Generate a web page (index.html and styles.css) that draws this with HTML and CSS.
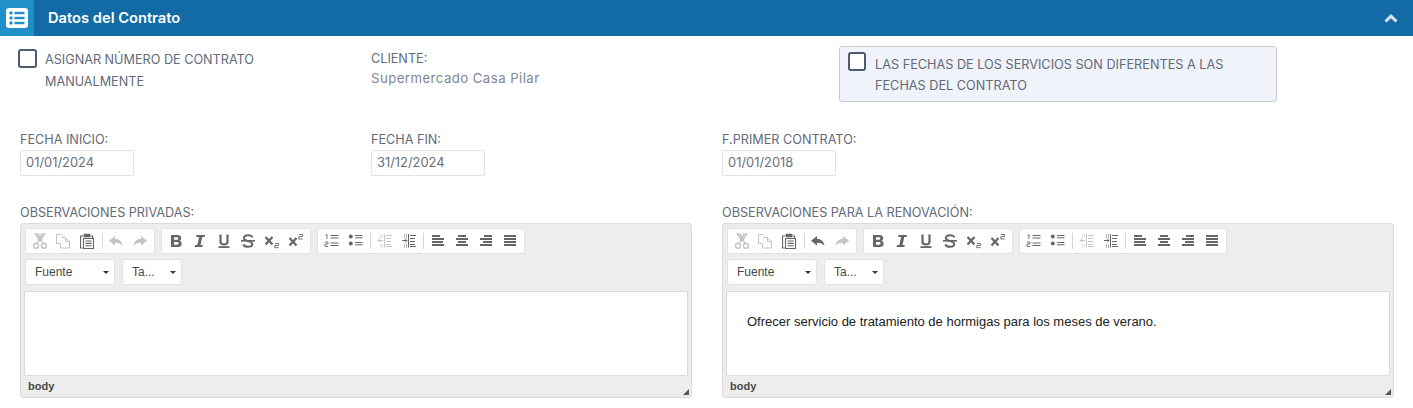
FILE: index.html
```html
<!DOCTYPE html>
<html lang="es">
<head>
<meta charset="utf-8">
<title>Datos del Contrato</title>
<link rel="stylesheet" href="styles.css">
</head>
<body>
<svg class="defs" width="0" height="0" aria-hidden="true">
  <symbol id="i-cut" viewBox="0 0 16 16"><path d="M3 0 L8 8 L13 0 M5.5 0 L10 8.5 M10.5 0 L6 8.5" fill="none" stroke="currentColor" stroke-width="1.6"/><circle cx="4" cy="12.8" r="2.5" fill="none" stroke="currentColor" stroke-width="1.4"/><circle cx="12" cy="12.8" r="2.5" fill="none" stroke="currentColor" stroke-width="1.4"/><path d="M6 9 L4.8 10.4 M10 9 L11.2 10.4" stroke="currentColor" stroke-width="1.4"/></symbol>
  <symbol id="i-copy" viewBox="0 0 16 16"><path d="M0.5 10.5 V1.5 H5 L6.5 3 M5.5 4.5 H9 L13.5 8.5 V15 H4.5 V11" fill="none" stroke="currentColor" stroke-width="1"/><path d="M9.5 4.5 V8.5 H13.5" fill="none" stroke="currentColor" stroke-width="1"/><path d="M0.5 10.5 H4.5" stroke="currentColor" stroke-width="1"/></symbol>
  <symbol id="i-paste" viewBox="0 0 16 16"><path d="M2.5 15 H0.5 V3 H3 M11 3 H12.5 V5" fill="none" stroke="currentColor" stroke-width="1.2"/><rect x="3.5" y="0.8" width="7" height="3.4" rx="1" fill="currentColor"/><rect x="3.5" y="5.5" width="10" height="10" fill="none" stroke="currentColor" stroke-width="1.1"/><path d="M5.5 8 H11.7 M5.5 10.4 H11.7 M5.5 12.8 H11.7" stroke="currentColor" stroke-width="1.1"/></symbol>
  <symbol id="i-undo" viewBox="0 0 16 16"><path d="M7 3 L1 7.8 L7 12.5 V9.8 C10 9.6 12.5 10.5 14.5 12.8 C14 8.6 11 6 7 5.8 Z" fill="currentColor"/></symbol>
  <symbol id="i-redo" viewBox="0 0 16 16"><path d="M9 3 L15 7.8 L9 12.5 V9.8 C6 9.6 3.5 10.5 1.5 12.8 C2 8.6 5 6 9 5.8 Z" fill="currentColor"/></symbol>
  <symbol id="i-bold" viewBox="0 0 16 16"><path fill-rule="evenodd" d="M3 2 H9.5 C12 2 13.2 3.3 13.2 5.2 C13.2 6.5 12.5 7.4 11.4 7.8 C12.8 8.2 13.7 9.3 13.7 10.8 C13.7 13 12.1 14 9.8 14 H3 Z M6 4.3 V6.8 H9 C9.8 6.8 10.2 6.3 10.2 5.5 C10.2 4.7 9.8 4.3 9 4.3 Z M6 9 V11.7 H9.2 C10.1 11.7 10.6 11.2 10.6 10.3 C10.6 9.5 10.1 9 9.2 9 Z" fill="currentColor"/></symbol>
  <symbol id="i-italic" viewBox="0 0 16 16"><path d="M4.5 2 H13 L12.7 4 H10.3 L8.5 12 H10.8 L10.4 14 H2.6 L3 12 H5.3 L7.1 4 H4.2 Z" fill="currentColor"/></symbol>
  <symbol id="i-underline" viewBox="0 0 16 16"><path d="M4.5 1.5 V8.5 C4.5 10.5 5.8 11.5 8 11.5 C10.2 11.5 11.5 10.5 11.5 8.5 V1.5" fill="none" stroke="currentColor" stroke-width="2.2"/><rect x="2.5" y="13.2" width="11" height="1.8" fill="currentColor"/></symbol>
  <symbol id="i-strike" viewBox="0 0 16 16"><path d="M12.5 4.3 C11.8 3 10.2 2.3 8 2.3 C5.4 2.3 3.8 3.4 3.8 5.1 C3.8 9 12.3 7.2 12.3 11 C12.3 12.7 10.5 13.8 8 13.8 C5.7 13.8 4 13 3.3 11.5" fill="none" stroke="currentColor" stroke-width="2"/><rect x="1" y="7" width="14" height="1.6" fill="currentColor"/></symbol>
  <symbol id="i-sub" viewBox="0 0 16 16"><path d="M1.5 4 L8.5 11.5 M8.5 4 L1.5 11.5" stroke="currentColor" stroke-width="2.3"/><path d="M10.8 10.5 H14.5 V12.5 H10.8 V14.7 H14.7" fill="none" stroke="currentColor" stroke-width="0.9"/></symbol>
  <symbol id="i-sup" viewBox="0 0 16 16"><path d="M1.5 5 L8.5 12.5 M8.5 5 L1.5 12.5" stroke="currentColor" stroke-width="2.3"/><path d="M10.8 1.5 H14.5 V3.7 H10.8 V6 H14.7" fill="none" stroke="currentColor" stroke-width="0.9"/></symbol>
  <symbol id="i-ol" viewBox="0 0 16 16"><path d="M1.5 2.2 L3 1.5 V6 M1 9 H4 V11 H1 V13.5 H4.2" fill="none" stroke="currentColor" stroke-width="0.9"/><path d="M6.5 2.5 H14.5 M6.5 5 H14.5 M6.5 10 H14.5 M6.5 12.5 H14.5" stroke="currentColor" stroke-width="1"/></symbol>
  <symbol id="i-ul" viewBox="0 0 16 16"><circle cx="2.8" cy="3.5" r="2" fill="currentColor"/><circle cx="2.8" cy="10.5" r="2" fill="currentColor"/><path d="M7 2.5 H14.5 M7 4.8 H14.5 M7 9.5 H14.5 M7 11.8 H14.5" stroke="currentColor" stroke-width="1"/></symbol>
  <symbol id="i-outdent" viewBox="0 0 16 16"><path d="M7.5 1 V14.5" stroke="currentColor" stroke-width="1"/><path d="M9 2.5 H15 M9 5.5 H14 M9 8.5 H14 M9 11.5 H14 M9 13.5 H15 M1 7.5 H6 M3 5.5 L1 7.5 L3 9.5" fill="none" stroke="currentColor" stroke-width="1"/><path d="M3 2 H4 M5 2 H6 M3 4 H4 M5 4 H6 M3 12 H4 M5 12 H6 M3 14 H4 M5 14 H6" stroke="currentColor" stroke-width="1"/></symbol>
  <symbol id="i-indent" viewBox="0 0 16 16"><path d="M7.5 1 V14.5" stroke="currentColor" stroke-width="1"/><path d="M9 2.5 H15 M9 5.5 H14 M9 8.5 H14 M9 11.5 H14 M9 13.5 H15 M1 7.5 H6 M4 5.5 L6 7.5 L4 9.5" fill="none" stroke="currentColor" stroke-width="1"/><path d="M3 2 H4 M5 2 H6 M3 4 H4 M5 4 H6 M3 12 H4 M5 12 H6 M3 14 H4 M5 14 H6" stroke="currentColor" stroke-width="1"/></symbol>
  <symbol id="i-left" viewBox="0 0 16 16"><path d="M2 2 H10 V4 H2 Z M2 5 H14 V7 H2 Z M2 8 H13 V10 H2 Z M2 11 H14 V13 H2 Z" fill="currentColor"/></symbol>
  <symbol id="i-center" viewBox="0 0 16 16"><path d="M4 2 H12 V4 H4 Z M2 5 H14 V7 H2 Z M4 8 H12 V10 H4 Z M2 11 H14 V13 H2 Z" fill="currentColor"/></symbol>
  <symbol id="i-right" viewBox="0 0 16 16"><path d="M6 2 H14 V4 H6 Z M2 5 H14 V7 H2 Z M5 8 H14 V10 H5 Z M2 11 H14 V13 H2 Z" fill="currentColor"/></symbol>
  <symbol id="i-justify" viewBox="0 0 16 16"><path d="M2 2 H14 V4 H2 Z M2 5 H14 V7 H2 Z M2 8 H14 V10 H2 Z M2 11 H14 V13 H2 Z" fill="currentColor"/></symbol>
</svg>

<header class="bar">
  <div class="bar-icon">
    <svg width="22" height="20" viewBox="0 0 22 20"><rect x="0" y="0" width="22" height="20" rx="3" fill="#fff"/><g fill="#2090c8"><circle cx="5" cy="5" r="1.7"/><circle cx="5" cy="10" r="1.7"/><circle cx="5" cy="15" r="1.7"/><rect x="8.5" y="3.8" width="10" height="2.4"/><rect x="8.5" y="8.8" width="10" height="2.4"/><rect x="8.5" y="13.8" width="10" height="2.4"/></g></svg>
  </div>
  <h1 class="bar-title">Datos del Contrato</h1>
  <svg class="bar-chevron" width="14" height="9" viewBox="0 0 14 9"><path d="M1.5 7.5 L7 2.2 L12.5 7.5" fill="none" stroke="#d3e3ef" stroke-width="3"/></svg>
</header>

<main class="content">
  <section class="row row-top">
    <label class="check check-first"><span class="box"></span><span class="check-text">ASIGNAR NÚMERO DE CONTRATO MANUALMENTE</span></label>
    <div class="client">
      <div class="field-label">CLIENTE:</div>
      <div class="client-name">Supermercado Casa Pilar</div>
    </div>
    <label class="check check-panel"><span class="box box-small"></span><span class="check-text">LAS FECHAS DE LOS SERVICIOS SON DIFERENTES A LAS FECHAS DEL CONTRATO</span></label>
  </section>

  <section class="row row-dates">
    <div><div class="field-label">FECHA INICIO:</div><div class="date">01/01/2024</div></div>
    <div><div class="field-label">FECHA FIN:</div><div class="date">31/12/2024</div></div>
    <div><div class="field-label">F.PRIMER CONTRATO:</div><div class="date">01/01/2018</div></div>
  </section>

  <section class="editors">
    <div>
      <div class="field-label">OBSERVACIONES PRIVADAS:</div>
      <div class="editor">
        <div class="toolbar">
          <div class="tgroup">
            <span class="btn off"><svg><use href="#i-cut"/></svg></span><span class="btn off"><svg><use href="#i-copy"/></svg></span><span class="btn"><svg><use href="#i-paste"/></svg></span><i class="sep"></i><span class="btn off"><svg><use href="#i-undo"/></svg></span><span class="btn off"><svg><use href="#i-redo"/></svg></span>
          </div>
          <div class="tgroup">
            <span class="btn"><svg><use href="#i-bold"/></svg></span><span class="btn"><svg><use href="#i-italic"/></svg></span><span class="btn"><svg><use href="#i-underline"/></svg></span><span class="btn"><svg><use href="#i-strike"/></svg></span><span class="btn"><svg><use href="#i-sub"/></svg></span><span class="btn"><svg><use href="#i-sup"/></svg></span>
          </div>
          <div class="tgroup">
            <span class="btn"><svg><use href="#i-ol"/></svg></span><span class="btn"><svg><use href="#i-ul"/></svg></span><i class="sep sep-wide"></i><span class="btn off"><svg><use href="#i-outdent"/></svg></span><span class="btn"><svg><use href="#i-indent"/></svg></span><i class="sep sep-wide"></i><span class="btn"><svg><use href="#i-left"/></svg></span><span class="btn"><svg><use href="#i-center"/></svg></span><span class="btn"><svg><use href="#i-right"/></svg></span><span class="btn"><svg><use href="#i-justify"/></svg></span>
          </div>
        </div>
        <div class="toolbar">
          <div class="combo combo-font">Fuente<b class="caret"></b></div>
          <div class="combo combo-size">Ta...<b class="caret"></b></div>
        </div>
        <div class="doc"></div>
        <div class="status"><span>body</span><b class="grip"></b></div>
      </div>
    </div>
    <div>
      <div class="field-label">OBSERVACIONES PARA LA RENOVACIÓN:</div>
      <div class="editor">
        <div class="toolbar">
          <div class="tgroup">
            <span class="btn off"><svg><use href="#i-cut"/></svg></span><span class="btn off"><svg><use href="#i-copy"/></svg></span><span class="btn"><svg><use href="#i-paste"/></svg></span><i class="sep"></i><span class="btn"><svg><use href="#i-undo"/></svg></span><span class="btn off"><svg><use href="#i-redo"/></svg></span>
          </div>
          <div class="tgroup">
            <span class="btn"><svg><use href="#i-bold"/></svg></span><span class="btn"><svg><use href="#i-italic"/></svg></span><span class="btn"><svg><use href="#i-underline"/></svg></span><span class="btn"><svg><use href="#i-strike"/></svg></span><span class="btn"><svg><use href="#i-sub"/></svg></span><span class="btn"><svg><use href="#i-sup"/></svg></span>
          </div>
          <div class="tgroup">
            <span class="btn"><svg><use href="#i-ol"/></svg></span><span class="btn"><svg><use href="#i-ul"/></svg></span><i class="sep sep-wide"></i><span class="btn off"><svg><use href="#i-outdent"/></svg></span><span class="btn"><svg><use href="#i-indent"/></svg></span><i class="sep sep-wide"></i><span class="btn"><svg><use href="#i-left"/></svg></span><span class="btn"><svg><use href="#i-center"/></svg></span><span class="btn"><svg><use href="#i-right"/></svg></span><span class="btn"><svg><use href="#i-justify"/></svg></span>
          </div>
        </div>
        <div class="toolbar">
          <div class="combo combo-font">Fuente<b class="caret"></b></div>
          <div class="combo combo-size">Ta...<b class="caret"></b></div>
        </div>
        <div class="doc"><p>Ofrecer servicio de tratamiento de hormigas para los meses de verano.</p></div>
        <div class="status"><span>body</span><b class="grip"></b></div>
      </div>
    </div>
  </section>
</main>
</body>
</html>
```

FILE: styles.css
```css
* { box-sizing: border-box; }
html, body { margin: 0; padding: 0; background: #fff; }
body { font-family: Inter, "Liberation Sans", sans-serif; font-size: 12.65px; color: #636a78; overflow: hidden; }
.defs { display: block; height: 0; }

.bar { height: 36px; background: #126ba4; display: flex; align-items: center; color: #fff; }
.bar-icon { width: 34px; height: 36px; background: #2090c8; display: flex; align-items: center; justify-content: center; }
.bar-title { margin: 0 0 0 14px; font-size: 14.7px; font-weight: 600; line-height: 36px; flex: 1; }
.bar-chevron { margin-right: 15px; }

.content { padding: 0 19px 0 20px; }
.row { display: grid; grid-template-columns: 351px 351px 1fr; }
.row-top { padding-top: 10px; height: 66px; }
.row-dates { margin-top: 27px; }

.field-label { line-height: 20px; height: 20px; white-space: nowrap; position: relative; top: 1px; }
.client { padding-top: 2px; }
.client-name { color: #7d8694; font-size: 13.2px; letter-spacing: 0.45px; line-height: 18px; margin-top: 1px; }

.check { display: flex; align-items: flex-start; }
.check-text { line-height: 21px; margin-top: 1px; }
.check-first { margin: 3px 0 0 -2px; width: 290px; }
.check-first .check-text { margin-left: 8px; margin-top: 0; line-height: 22px; }
.box { flex: none; width: 19px; height: 19px; border: 2px solid #4e5a72; border-radius: 3px; background: #fff; }
.check-panel { margin-left: 117px; width: 438px; height: 56px; background: #f0f3fa; border: 1px solid #c9ccd3; border-radius: 3px; padding: 6px 7px 0 8px; }
.check-panel .check-text { margin-left: 9px; font-size: 12.7px; }
.box-small { width: 18px; height: 19px; margin-top: -1px; }

.date { margin-top: 1px; width: 114px; height: 26px; border: 1px solid #e1e3eb; border-radius: 2px; padding-left: 5px; line-height: 24px; color: #6a6f78; font-size: 12.9px; }

.editors { display: grid; grid-template-columns: 672px 672px; column-gap: 30px; margin-top: 26px; }
.editor { margin-top: 1px; height: 175px; background: #ededed; border: 1px solid #dcdcdc; border-radius: 3px; padding: 4px 3px 0; display: flex; flex-direction: column; position: relative; font-family: "Liberation Sans", sans-serif; }
.toolbar { display: flex; gap: 6px; margin-left: 1px; height: 26px; margin-bottom: 5px; }
.tgroup { display: flex; align-items: center; background: #fff; border: 1px solid #e2e2e2; border-radius: 3px; padding: 0 2px; height: 26px; }
.btn { width: 24px; height: 24px; display: flex; align-items: center; justify-content: center; color: #666; }
.btn svg { width: 16px; height: 16px; display: block; }
.btn.off { color: #c4c4c4; }
.sep { display: block; width: 1px; height: 16px; background: #d5d5d5; margin: 0 1.5px; }
.sep-wide { margin: 0 2px; }

.combo { background: #fff; border: 1px solid #e2e2e2; border-radius: 3px; height: 26px; line-height: 25px; font-size: 12px; color: #484848; padding-left: 9px; position: relative; }
.combo-font { width: 90px; }
.combo-size { width: 60px; margin-left: 1px; }
.caret { position: absolute; right: 5px; top: 11px; width: 0; height: 0; border-left: 3px solid transparent; border-right: 3px solid transparent; border-top: 3px solid #333; }

.doc { background: #fff; border: 1px solid #dcdcdc; border-radius: 2px; height: 85px; margin-top: 1px; flex: none; font-size: 13px; color: #222; }
.doc p { margin: 0; padding: 21px 0 0 20px; line-height: 17px; }

.status { flex: 1; display: flex; align-items: center; font-size: 11px; font-weight: 700; color: #484848; padding: 0 0 2px 4px; }
.grip { position: absolute; right: 2px; bottom: 2px; width: 0; height: 0; border-left: 6px solid transparent; border-bottom: 6px solid #555; }
```
